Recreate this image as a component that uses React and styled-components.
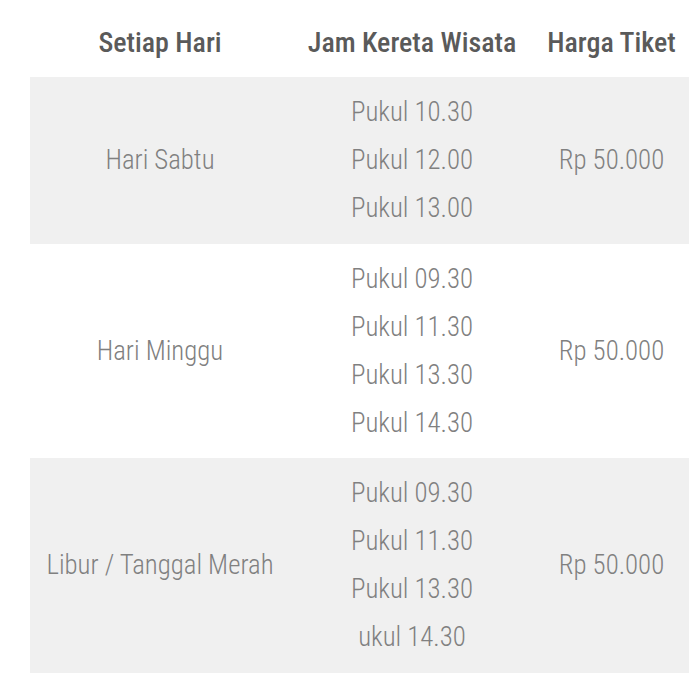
import React from "react";
import styled, { createGlobalStyle } from "styled-components";

const GlobalStyle = createGlobalStyle`
  body {
    margin: 0;
    background: #fff;
    font-family: "Roboto Condensed", "Lato", "Liberation Sans", sans-serif;
  }
`;

const Wrapper = styled.div`
  padding-left: 30px;
  width: 659px;
`;

const Table = styled.table`
  width: 100%;
  border-collapse: collapse;
  table-layout: fixed;
  text-align: center;
`;

const HeadCell = styled.th`
  padding: 26px 0 17px;
  font-size: 28px;
  line-height: 34px;
  font-weight: 500;
  color: #5a5a5a;
  white-space: nowrap;
`;

const BodyRow = styled.tr`
  background-color: ${({ $striped }) => ($striped ? "#f0f0f0" : "transparent")};
`;

const Cell = styled.td`
  padding: 11px 0 11.5px;
  font-size: 26.8px;
  line-height: 48px;
  font-weight: 300;
  color: #808080;
  vertical-align: middle;
  white-space: nowrap;
`;

const TimeLine = styled.div`
  line-height: 48px;
`;

const schedule = [
  { day: "Hari Sabtu", times: ["Pukul 10.30", "Pukul 12.00", "Pukul 13.00"], price: "Rp 50.000" },
  { day: "Hari Minggu", times: ["Pukul 09.30", "Pukul 11.30", "Pukul 13.30", "Pukul 14.30"], price: "Rp 50.000" },
  { day: "Libur / Tanggal Merah", times: ["Pukul 09.30", "Pukul 11.30", "Pukul 13.30", "ukul 14.30"], price: "Rp 50.000" }
];

const App = () => {
  return (
    <>
      <GlobalStyle />
      <Wrapper>
        <Table>
          <colgroup>
            <col style={{ width: 260 }} />
            <col style={{ width: 244 }} />
            <col style={{ width: 155 }} />
          </colgroup>
          <thead>
            <tr>
              <HeadCell>Setiap Hari</HeadCell>
              <HeadCell>Jam Kereta Wisata</HeadCell>
              <HeadCell>Harga Tiket</HeadCell>
            </tr>
          </thead>
          <tbody>
            {schedule.map((row, i) => (
              <BodyRow key={row.day} $striped={i % 2 === 0}>
                <Cell>{row.day}</Cell>
                <Cell>
                  {row.times.map((t) => (
                    <TimeLine key={t}>{t}</TimeLine>
                  ))}
                </Cell>
                <Cell>{row.price}</Cell>
              </BodyRow>
            ))}
          </tbody>
        </Table>
      </Wrapper>
    </>
  );
};

export default App;
